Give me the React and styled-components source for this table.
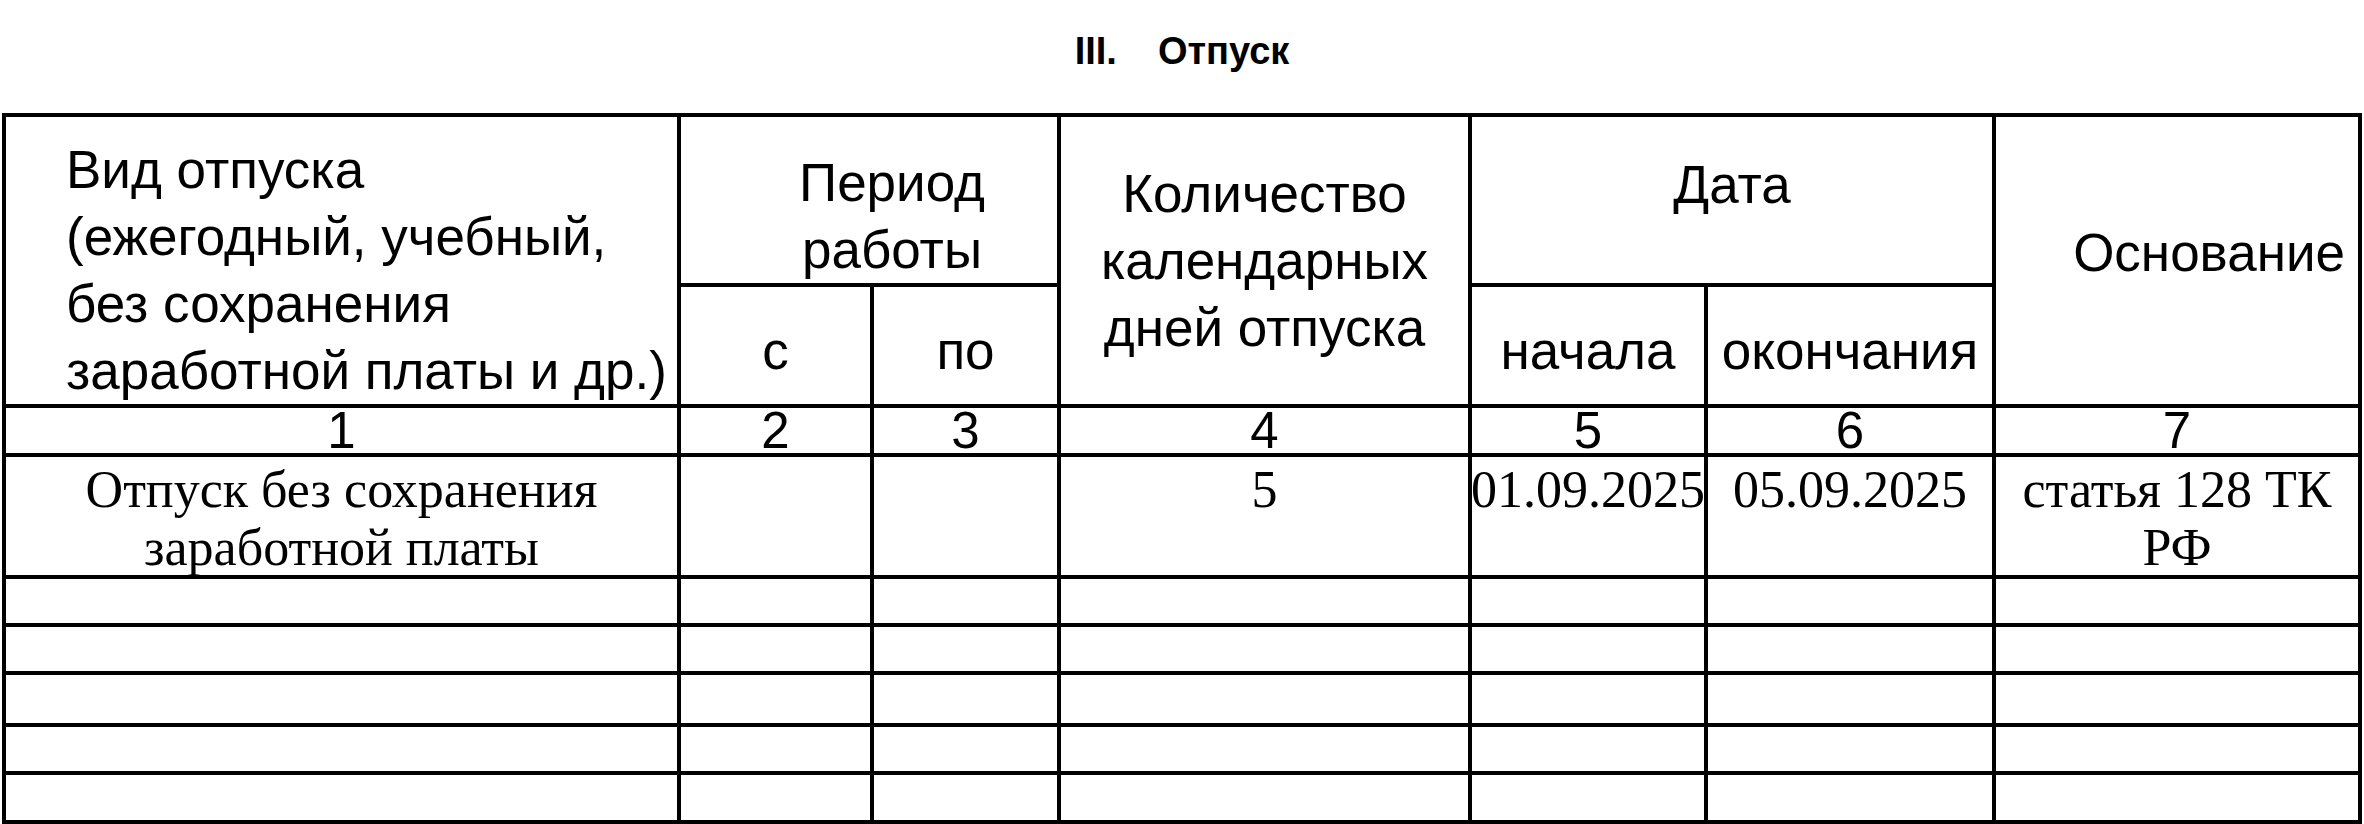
import React from 'react';
import styled, { createGlobalStyle } from 'styled-components';

const GlobalStyle = createGlobalStyle`
    html, body {
        margin: 0;
        padding: 0;
        background: #fff;
    }
    body {
        font-family: "Liberation Sans", Arial, sans-serif;
        color: #000;
    }
`;

const Page = styled.div`
    width: 2364px;
`;

const Title = styled.h2`
    margin: 0;
    box-sizing: border-box;
    height: 113px;
    padding-top: 30px;
    display: flex;
    justify-content: center;
    align-items: baseline;
    gap: 41px;
    font-family: "Liberation Sans", Arial, sans-serif;
    font-weight: 700;
    font-size: 38px;
    line-height: normal;
`;

const Sheet = styled.div`
    display: grid;
    grid-template-columns: 671px 189px 183px 407px 232px 284px 362px;
    grid-template-rows: 166px 117px 45px 118px 44px 44px 48px 44px 45px;
    gap: 4px;
    padding: 4px;
    margin-left: 2px;
    width: max-content;
    background: #000;
`;

const Cell = styled.div`
    background: #fff;
    display: flex;
    box-sizing: border-box;
    min-width: 0;
    grid-column: span ${({ $cols }) => $cols || 1};
    grid-row: span ${({ $rows }) => $rows || 1};
`;

const HeadCell = styled(Cell)`
    font-family: "Liberation Sans", Arial, sans-serif;
    font-size: 53px;
    line-height: 67px;
    align-items: ${({ $v }) => $v || 'center'};
    justify-content: ${({ $h }) => $h || 'center'};
    text-align: ${({ $h }) => ($h === 'flex-start' ? 'left' : 'center')};
    padding: ${({ $pad }) => $pad || '0'};
    white-space: nowrap;
`;

const NumCell = styled(Cell)`
    font-family: "Liberation Sans", Arial, sans-serif;
    font-size: 51px;
    line-height: 45px;
    justify-content: center;
    align-items: flex-start;
`;

const DataCell = styled(Cell)`
    font-family: "Liberation Serif", "Times New Roman", serif;
    font-size: 52px;
    line-height: 58px;
    justify-content: center;
    align-items: flex-start;
    text-align: center;
    padding-top: 4px;
`;

const columns = ['1', '2', '3', '4', '5', '6', '7'];

const rows = [
    ['Отпуск без сохранения заработной платы', '', '', '5', '01.09.2025', '05.09.2025', 'статья 128 ТК РФ'],
];

const blankRows = 5;

export default function App() {
    return (
        <Page>
            <GlobalStyle />
            <Title>
                <span>III.</span>
                <span>Отпуск</span>
            </Title>
            <Sheet>
                <HeadCell $rows={2} $v="flex-end" $h="flex-start" $pad="0 0 0 60px">
                    <div>
                        Вид отпуска<br />
                        (ежегодный, учебный,<br />
                        без сохранения<br />
                        заработной платы и др.)
                    </div>
                </HeadCell>
                <HeadCell $cols={2} $v="flex-end" $pad="0 0 0 46px">
                    <div>Период<br />работы</div>
                </HeadCell>
                <HeadCell $rows={2}>
                    <div>Количество<br />календарных<br />дней отпуска</div>
                </HeadCell>
                <HeadCell $cols={2} $v="flex-start" $pad="34px 0 0 0">
                    Дата
                </HeadCell>
                <HeadCell $rows={2} $h="flex-end" $pad="0 13px 16px 0">
                    Основание
                </HeadCell>
                <HeadCell $v="flex-end" $pad="0 0 20px 0">с</HeadCell>
                <HeadCell $v="flex-end" $pad="0 0 20px 0">по</HeadCell>
                <HeadCell $v="flex-end" $pad="0 0 20px 0">начала</HeadCell>
                <HeadCell $v="flex-end" $pad="0 0 20px 0">окончания</HeadCell>

                {columns.map((n) => (
                    <NumCell key={n}>{n}</NumCell>
                ))}

                {rows.map((row, i) =>
                    row.map((value, j) => <DataCell key={`${i}-${j}`}>{value}</DataCell>)
                )}

                {Array.from({ length: blankRows * columns.length }).map((_, i) => (
                    <Cell key={`blank-${i}`} />
                ))}
            </Sheet>
        </Page>
    );
}
